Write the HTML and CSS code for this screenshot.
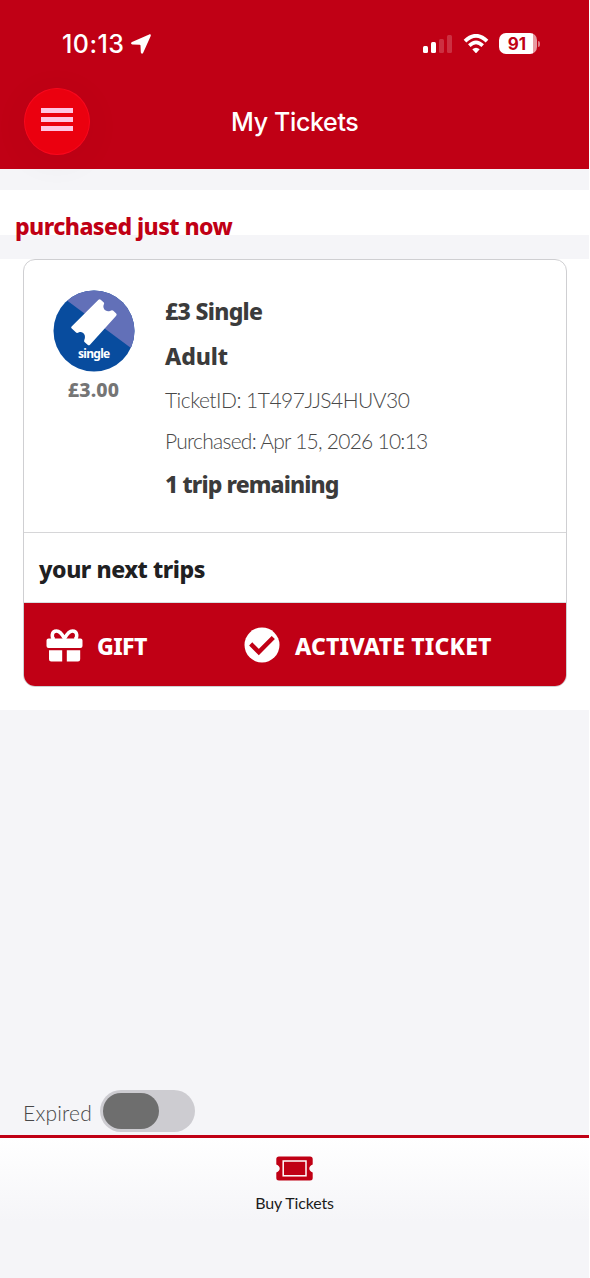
FILE: index.html
```html
<!DOCTYPE html>
<html lang="en">
<head>
<meta charset="utf-8">
<title>My Tickets</title>
<link rel="stylesheet" href="styles.css">
</head>
<body>
<div class="screen">
  <header class="header">
    <div class="status">
      <span class="clock">10:13</span>
      <svg class="location" width="20" height="20" viewBox="0 0 20 20"><path d="M18.200 .5 1 8.100C-.4 8.900-.1 10.300 1.400 10.400L8.700 10.700Q9.400 10.800 9.500 11.500L9.800 18.300C10 19.900 11.500 20.200 12.200 18.800L19.600 2.300C20.200 .9 19.400 0 18.200 .5Z"/></svg>
      <svg class="signal" width="30" height="20" viewBox="0 0 30 20"><rect x="0" y="12" width="5" height="7" rx="1.500"/><rect x="8" y="8" width="5" height="11" rx="1.500"/><g opacity=".19"><rect x="16" y="5" width="5" height="14" rx="1.500"/><rect x="24" y="1" width="5" height="18" rx="1.500"/></g></svg>
      <svg class="wifi" width="26" height="20" viewBox="0 0 26 20"><path d="M2 7.200Q13-3.500 24 7.200" stroke-width="3.800"/><path d="M6.300 11.600Q13 5 19.700 11.600" stroke-width="3.600"/><path class="dot" d="M9.300 15.300Q13 12.200 16.700 15.300L13.600 18.700Q13 19.300 12.400 18.700Z"/></svg>
      <div class="battery"><span class="level">91</span></div>
      <span class="battery-cap"></span>
    </div>
    <div class="titlebar">
      <button class="menu" aria-label="Menu"><i></i><i></i><i></i></button>
      <h1 class="title">My Tickets</h1>
    </div>
  </header>
  <h2 class="section-title"><span class="t-section">purchased just now</span></h2>
  <main class="panel">
    <article class="card">
      <div class="details">
        <div class="product">
          <svg class="badge" width="82" height="82" viewBox="0 0 82 82">
            <defs><clipPath id="disc"><circle cx="41" cy="41" r="40.500"/></clipPath></defs>
            <g clip-path="url(#disc)"><path fill="#084c9e" d="M0 0H82V82H0Z"/><path fill="#6270b8" d="M6 4.300 15 11.300 82 61V0H6Z"/></g>
            <path class="stub" d="M45.500 9.700Q46.800 8.700 48 9.900L50.800 12.500Q51.500 13.300 50.900 14.300C49 18 52.500 22.500 57 21Q59.300 19.800 60.300 20.800L63.200 23.600Q64.200 24.700 63.200 25.800L37 54.700Q35.800 55.900 34.600 54.800L31.500 52Q30.700 51.200 31.300 49.900C33.500 45 30 40.800 26 42.200Q24 43.500 22.800 42.300L18.500 38.300Q17.700 37.300 18.600 36.400Z"/>
            <text class="badge-text" x="25" y="67.500">single</text>
          </svg>
          <span class="price">£3.00</span>
        </div>
        <div class="facts">
          <p class="strong t-name">£3 Single</p>
          <p class="strong t-adult">Adult</p>
          <p class="light t-id">TicketID: 1T497JJS4HUV30</p>
          <p class="light t-date">Purchased: Apr 15, 2026 10:13</p>
          <p class="strong t-left">1 trip remaining</p>
        </div>
      </div>
      <div class="trips"><span class="t-trips">your next trips</span></div>
      <div class="actions">
        <button class="action gift">
          <svg width="37" height="33" viewBox="0 0 37 33"><path d="M2.500 9.500H34.500Q36.500 9.500 36.500 11.500V17Q36.500 19 34.500 19H2.500Q.5 19 .5 17V11.500Q.5 9.500 2.500 9.500ZM3 21.200H16.200V32.500H5.200Q3 32.500 3 30.300ZM20.800 21.200H34.200V30.300Q34.200 32.500 32 32.500H20.800Z"/><path class="bow" d="M18.500 9.500C15.500 4 13.300 2 10.600 2C5.300 2 5.300 8.500 8.200 10.500M18.500 9.500C21.500 4 23.700 2 26.400 2C31.700 2 31.700 8.500 28.800 10.500"/></svg>
          <span class="t-gift">GIFT</span>
        </button>
        <button class="action activate">
          <svg width="36" height="36" viewBox="0 0 36 36"><circle cx="18" cy="18" r="17.500"/><path class="tick" d="M8.300 18.500 14.800 25 27.700 12.100"/></svg>
          <span class="t-activate">ACTIVATE TICKET</span>
        </button>
      </div>
    </article>
  </main>
  <div class="filter">
    <span class="t-expired">Expired</span>
    <div class="toggle"><div class="knob"></div></div>
  </div>
  <nav class="tabbar">
    <svg width="37" height="25" viewBox="0 0 37 25"><path fill="#c00015" d="M3 .5H34Q36.700 .5 36.700 3V8.500Q33.300 9.800 33.300 12.500T36.700 16.500V22Q36.700 24.500 34 24.500H3Q.3 24.500 .3 22V16.500Q3.700 15.200 3.700 12.500T.3 8.500V3Q.3 .5 3 .5Z"/><rect x="7.200" y="5" width="22.800" height="14.800" fill="none" stroke="#fff" stroke-width="1.500"/></svg>
    <span class="t-buy">Buy Tickets</span>
  </nav>
</div>
</body>
</html>
```
FILE: styles.css
```css
* { box-sizing: border-box; margin: 0; padding: 0; }
body { background: #fff; font-family: "Noto Sans", sans-serif; }
button { border: 0; background: none; font: inherit; color: inherit; }
span, p, h1 { white-space: nowrap; }
.screen { width: 589px; height: 1278px; overflow: hidden; background: #f5f5f8; display: flex; flex-direction: column; }
.header { height: 169px; flex: none; background: #c00015; color: #fff; font-family: Inter, sans-serif; }
.status { height: 88px; padding: 34px 0 0 62px; display: flex; }
.clock { width: 69px; font-size: 25px; line-height: 20px; font-weight: 500; letter-spacing: .45px; }
.status svg { fill: #fff; flex: none; }
.signal { margin-left: 272px; }
.wifi { margin-left: 10px; }
.wifi path { fill: none; stroke: #fff; }
.wifi .dot { fill: #fff; stroke: none; }
.battery { margin: -1px 0 0 10px; width: 38px; height: 21px; border-radius: 7px; background: linear-gradient(90deg, #fff 34px, #e79aa2 34px); }
.level { display: block; width: 36px; text-align: center; color: #c00015; font-size: 17px; line-height: 22px; font-weight: 700; }
.battery-cap { margin: 7px 0 0 1px; width: 2px; height: 6px; border-radius: 0 3px 3px 0; background: #dc7984; }
.titlebar { height: 67px; display: flex; padding-left: 24px; }
.menu { width: 66px; height: 67px; border-radius: 50%; background: #eb000f; border: 1px solid #fa071d; box-shadow: 0 5px 36px rgba(80, 0, 20, .06); display: flex; flex-direction: column; align-items: center; gap: 4px; padding-top: 19px; }
.menu i { width: 32px; height: 5px; background: #ffc5e3; }
.title { margin-left: 141px; font-size: 25px; line-height: 69px; font-weight: 500; letter-spacing: -.35px; }
.section-title { margin-top: 21px; height: 45px; flex: none; background: #fff; padding: 21px 0 0 15px; color: #c00015; font-size: 23px; line-height: 31px; font-weight: 800; letter-spacing: -.55px; }
.panel { margin-top: 24px; height: 451px; flex: none; background: #fff; padding: 0 22px 0 23px; }
.card { height: 428px; border: 1px solid #cfcfd2; border-radius: 12px; overflow: hidden; }
.details { height: 272px; display: flex; }
.product { width: 110px; padding: 30px 0 0 29px; display: flex; flex-direction: column; align-items: center; }
.badge { flex: none; }
.stub { fill: #fff; }
.badge-text { fill: #fff; font-size: 12px; font-weight: 700; letter-spacing: -.7px; }
.price { margin-top: 4px; color: #757575; font-size: 19.500px; line-height: 28px; font-weight: 800; letter-spacing: .15px; }
.facts { padding: 35px 0 0 31px; }
.strong { color: #3b3b3b; font-size: 23px; line-height: 32px; font-weight: 800; }
.light { color: #484848; font-family: Lato, sans-serif; font-size: 21px; line-height: 28px; font-weight: 300; }
.t-name { letter-spacing: -.7px; }
.t-adult { margin-top: 13px; letter-spacing: -.1px; }
.t-id { margin-top: 14px; letter-spacing: -.52px; }
.t-date { margin-top: 13px; letter-spacing: -.75px; }
.t-left { margin-top: 13px; letter-spacing: -.9px; }
.trips { height: 71px; border-top: 1px solid #d6d6d8; border-bottom: 1px solid #d8dfe0; padding: 20px 0 0 15px; color: #202022; font-size: 23px; line-height: 32px; font-weight: 800; letter-spacing: -.45px; }
.actions { height: 84px; background: #c00015; color: #fff; display: flex; padding-left: 22px; font-size: 23px; font-weight: 800; }
.action { display: flex; align-items: center; height: 84px; }
.action svg { fill: #fff; flex: none; }
.action span { padding-top: 2px; }
.gift { width: 198px; gap: 14px; letter-spacing: -.6px; }
.activate { gap: 15px; letter-spacing: .15px; }
.action .bow { fill: none; stroke: #fff; stroke-width: 3.500px; }
.tick { fill: none; stroke: #c00015; stroke-width: 4.500px; stroke-linecap: square; }
.filter { margin-top: auto; height: 45px; flex: none; padding-left: 23px; display: flex; color: #484848; font-family: Lato, sans-serif; font-size: 21px; line-height: 45px; font-weight: 300; letter-spacing: .2px; }
.t-expired { width: 77px; }
.toggle { width: 95px; height: 42px; border-radius: 21px; background: #cdccd1; padding: 3px; }
.knob { width: 56px; height: 36px; border-radius: 18px; background: #6e6e6e; }
.tabbar { height: 143px; flex: none; border-top: 3px solid #c00015; background: linear-gradient(#fff, #f5f5f8 84px); display: flex; flex-direction: column; align-items: center; padding-top: 18px; }
.t-buy { margin-top: 11px; color: #1c1c1c; font-family: Lato, sans-serif; font-size: 16px; line-height: 22px; letter-spacing: -.15px; }
```
